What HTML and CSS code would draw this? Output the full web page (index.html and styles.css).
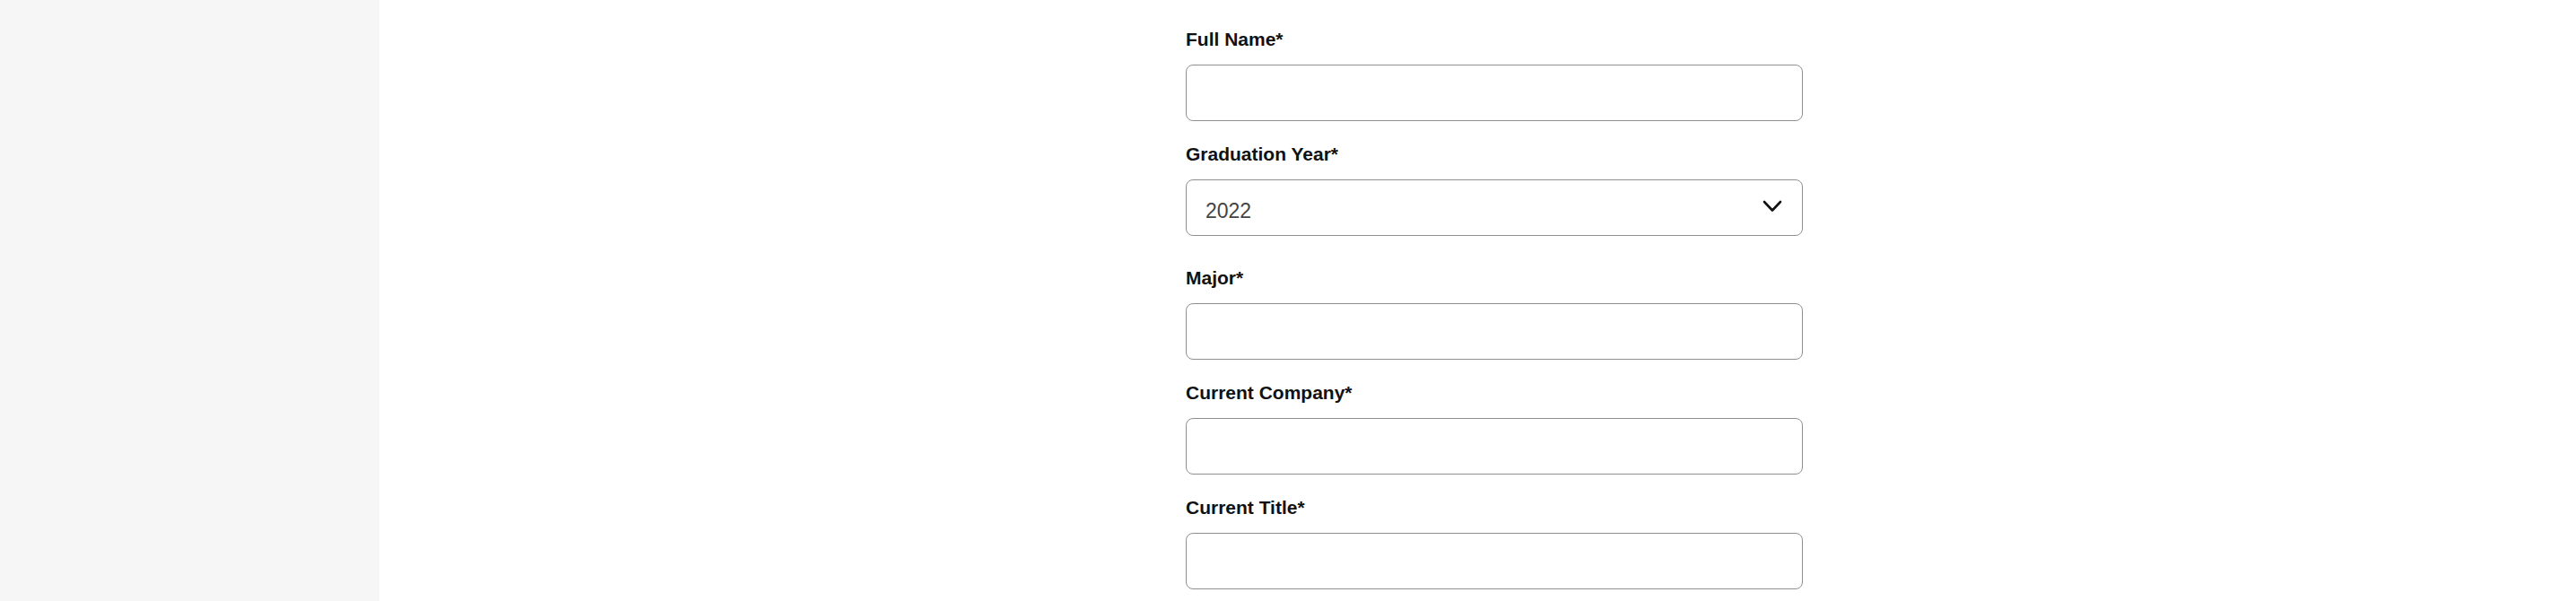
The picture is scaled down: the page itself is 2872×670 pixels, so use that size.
FILE: index.html
```html
<!DOCTYPE html>
<html lang="en">
<head>
  <meta charset="UTF-8">
  <meta name="viewport" content="width=device-width, initial-scale=1.0">
  <title>Alumni Profile</title>
  <link rel="stylesheet" href="styles.css">
</head>
<body>
  <div class="page">
    <aside class="sidebar"></aside>
    <main class="main">
      <form class="profile-form">
        <div class="field">
          <label for="fullName">Full Name*</label>
          <input type="text" id="fullName">
        </div>
        <div class="field field-select">
          <label for="gradYear">Graduation Year*</label>
          <div class="select-wrap">
            <select id="gradYear">
              <option>2020</option>
              <option>2021</option>
              <option selected>2022</option>
              <option>2023</option>
            </select>
            <svg class="chevron" width="22" height="14" viewBox="0 0 22 14">
              <path d="M2 2 L11 11.5 L20 2" fill="none" stroke="#111" stroke-width="2.6" stroke-linecap="round" stroke-linejoin="round"/>
            </svg>
          </div>
        </div>
        <div class="field">
          <label for="major">Major*</label>
          <input type="text" id="major">
        </div>
        <div class="field">
          <label for="company">Current Company*</label>
          <input type="text" id="company">
        </div>
        <div class="field">
          <label for="title">Current Title*</label>
          <input type="text" id="title">
        </div>
      </form>
    </main>
  </div>
</body>
</html>
```

FILE: styles.css
```css
body {
  margin: 0;
  font-family: "Liberation Sans", Arial, sans-serif;
  color: #111;
  background-color: #fff;
}
.page {
  display: flex;
  min-height: 100vh;
}
.sidebar {
  width: 423px;
  flex-shrink: 0;
  background-color: #f6f6f6;
}
.main {
  flex: 1;
  display: flex;
  justify-content: center;
  padding-left: 37px;
}
.profile-form {
  width: 688px;
  padding-top: 31px;
}
.field {
  display: flex;
  flex-direction: column;
  margin-bottom: 24px;
}
.field-select {
  margin-bottom: 34px;
}
.field label {
  font-size: 21px;
  font-weight: 700;
  line-height: 26px;
  margin-bottom: 15px;
}
.field input,
.field select {
  box-sizing: border-box;
  width: 100%;
  height: 63px;
  border: 1px solid #8f8f8f;
  border-radius: 8px;
  background-color: #fff;
  font-family: inherit;
  font-size: 23px;
  color: #444;
  padding: 6px 21px 0;
  margin: 0;
  outline: none;
}
.field select {
  appearance: none;
  -webkit-appearance: none;
}
.select-wrap {
  position: relative;
}
.chevron {
  position: absolute;
  right: 23px;
  top: 23px;
  pointer-events: none;
}
```
